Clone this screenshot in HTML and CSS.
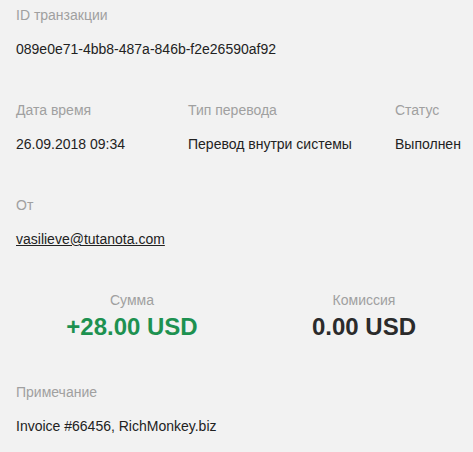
FILE: index.html
```html
<!DOCTYPE html>
<html lang="ru">
<head>
<meta charset="utf-8">
<title>Транзакция</title>
<link rel="stylesheet" href="styles.css">
</head>
<body>
<main class="details">
  <section class="field">
    <div class="label">ID транзакции</div>
    <div class="value">089e0e71-4bb8-487a-846b-f2e26590af92</div>
  </section>

  <section class="field row3">
    <div class="cell">
      <div class="label">Дата время</div>
      <div class="value">26.09.2018 09:34</div>
    </div>
    <div class="cell">
      <div class="label">Тип перевода</div>
      <div class="value">Перевод внутри системы</div>
    </div>
    <div class="cell">
      <div class="label">Статус</div>
      <div class="value">Выполнен</div>
    </div>
  </section>

  <section class="field">
    <div class="label">От</div>
    <div class="value"><a class="link" href="#">vasilieve@tutanota.com</a></div>
  </section>

  <section class="field amounts">
    <div class="amount">
      <div class="label">Сумма</div>
      <div class="sum positive">+28.00 USD</div>
    </div>
    <div class="amount">
      <div class="label">Комиссия</div>
      <div class="sum">0.00 USD</div>
    </div>
  </section>

  <section class="field note">
    <div class="label">Примечание</div>
    <div class="value">Invoice #66456, RichMonkey.biz</div>
  </section>
</main>
</body>
</html>
```

FILE: styles.css
```css
html, body {
  margin: 0;
  padding: 0;
  background: #f2f2f2;
}

body {
  font-family: "Liberation Sans", Arial, sans-serif;
  font-size: 14px;
  line-height: 20px;
  color: #222;
}

.details {
  padding: 5px 16px 0 16px;
  display: flex;
  flex-direction: column;
  gap: 41px;
}

.label {
  color: #a0a0a0;
  line-height: 20px;
}

.value {
  margin-top: 14px;
  line-height: 20px;
  color: #222;
}

.link {
  color: #222;
  text-decoration: underline;
}

.row3 {
  display: grid;
  grid-template-columns: 172px 207px auto;
}

.amounts {
  display: grid;
  grid-template-columns: 232px 232px;
  text-align: center;
}

.sum {
  margin-top: 3px;
  font-size: 24px;
  line-height: 28px;
  font-weight: bold;
  color: #2b2b2b;
}

.sum.positive {
  color: #1d9150;
}
```
